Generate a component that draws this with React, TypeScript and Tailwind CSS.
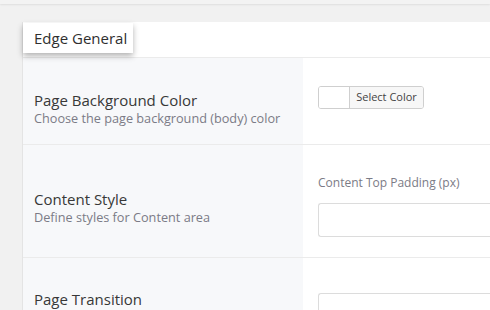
import React from 'react';

const font = { fontFamily: '"Open Sans", "Noto Sans", sans-serif' };

const Row = ({ title, desc, children, h, pt }: { title: string; desc?: string; children: React.ReactNode; h: string; pt: string }) => (
  <div className={`flex border-b border-[#ebebeb] ${h}`}>
    <div className={`w-[280px] shrink-0 bg-[#f7f8fa] pl-[11px] ${pt}`}>
      <div className="text-[15px] leading-[19px] text-[#383838]">{title}</div>
      {desc && <div className="text-[12.7px] leading-[17px] text-[#7b7b86]">{desc}</div>}
    </div>
    <div className="flex-1 pl-[15px]">{children}</div>
  </div>
);

export default function App() {
  return (
    <div className="w-[490px] h-[310px] overflow-hidden bg-[#f1f1f1]" style={font}>
      <div className="h-[4px] bg-[#f3f3f3] shadow-[0_1px_2px_rgba(0,0,0,0.08)]" />
      <div className="ml-[22px] mt-[18px] bg-white border-l border-[#e4e4e4]">
        <div className="h-[36px] border-b border-[#ebebeb] relative">
          <div className="absolute left-0 top-[1px] h-[30px] w-[110px] bg-white shadow-[0_3px_6px_rgba(0,0,0,0.3)] flex items-center pl-[11px] text-[15px] text-[#2f2f2f]">
            Edge General
          </div>
        </div>
        <Row title="Page Background Color" desc="Choose the page background (body) color" h="h-[87px]" pt="pt-[33px]">
          <div className="pt-[28px]">
            <div className="flex h-[23px] w-[106px] border border-[#cfcfcf] rounded-[3px] overflow-hidden">
              <div className="w-[31px] bg-white border-r border-[#cfcfcf]" />
              <div className="flex-1 bg-[#f7f7f7] text-[11px] text-[#444] flex items-center justify-center">Select Color</div>
            </div>
          </div>
        </Row>
        <Row title="Content Style" desc="Define styles for Content area" h="h-[113px]" pt="pt-[45px]">
          <div className="pt-[30px] text-[12px] leading-[16px] text-[#7b7b86]">Content Top Padding (px)</div>
          <div className="mt-[12px] h-[34px] border border-[#dcdcdc] rounded-l-[3px] border-r-0 bg-white" />
        </Row>
        <Row title="Page Transition" h="h-[100px]" pt="pt-[32px]">
          <div className="mt-[35px] h-[34px] border border-[#dcdcdc] rounded-l-[3px] border-r-0 bg-white" />
        </Row>
      </div>
    </div>
  );
}
